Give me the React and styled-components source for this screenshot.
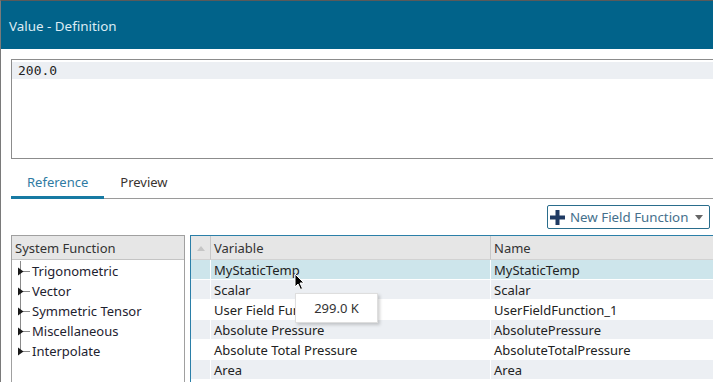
import React from 'react';
import styled, { createGlobalStyle } from 'styled-components';

const Global = createGlobalStyle`
  html, body { margin: 0; padding: 0; background: #fff; }
  body { width: 713px; height: 382px; overflow: hidden; font-family: "Noto Sans", "Open Sans", sans-serif; }
`;

const Window = styled.div`
  width: 713px;
  height: 382px;
  box-sizing: border-box;
  border-top: 1px solid #5a5a5a;
  border-left: 1px solid #7a7a7a;
  display: flex;
  flex-direction: column;
  overflow: hidden;
`;

const TitleBar = styled.div`
  height: 48px;
  flex: none;
  background: #01638a;
  color: #dcecf4;
  font-size: 13.4px;
  display: flex;
  align-items: center;
  padding-left: 8px;
  padding-top: 1px;
  box-sizing: border-box;
`;

const Body = styled.div`
  flex: 1;
  min-height: 0;
  padding: 10px 0 0 10px;
  display: flex;
  flex-direction: column;
`;

const Editor = styled.div`
  height: 100px;
  flex: none;
  border: 1px solid #8c8c8c;
  border-right: none;
  box-sizing: border-box;
  padding-top: 2px;
`;

const EditorLine = styled.div`
  background: ${p => (p.current ? '#eceff3' : 'transparent')};
  height: 17px;
  line-height: 17px;
  padding-left: 6px;
  font-family: "DejaVu Sans Mono", monospace;
  font-size: 13px;
  color: #222;
`;

const TabStrip = styled.div`
  display: flex;
  border-bottom: 1px solid #9a9a9a;
  flex: none;
`;

const Tab = styled.div`
  padding: 14px 16px 5px;
  line-height: 18px;
  font-size: 13px;
  color: ${p => (p.active ? '#2f7ba3' : '#3a3330')};
  border-bottom: 3px solid ${p => (p.active ? '#177aa3' : 'transparent')};
  margin-bottom: -1px;
`;

const Toolbar = styled.div`
  display: flex;
  justify-content: flex-end;
  padding: 6px 3px 6px 0;
  flex: none;
`;

const DropButton = styled.div`
  height: 24px;
  width: 163px;
  box-sizing: border-box;
  border: 1px solid #2a6d8c;
  border-radius: 2px;
  display: flex;
  align-items: center;
  gap: 5px;
  padding: 0 6px 0 2px;
  font-size: 13.3px;
  color: #45708c;
  background: #fff;
`;

const Caret = styled.span`
  width: 0;
  height: 0;
  border-left: 4px solid transparent;
  border-right: 4px solid transparent;
  border-top: 5px solid #666;
  margin-left: auto;
`;

const Panels = styled.div`
  flex: 1;
  min-height: 0;
  display: flex;
  gap: 5px;
`;

const FuncPanel = styled.div`
  width: 174px;
  flex: none;
  border: 1px solid #a0a0a0;
  border-bottom: none;
  box-sizing: border-box;
`;

const PanelHeader = styled.div`
  height: 24px;
  background: #e6e6e6;
  border-bottom: 1px solid #c4c4c4;
  box-sizing: border-box;
  font-size: 13px;
  color: #333;
  line-height: 24px;
  padding-left: 3px;
`;

const Tree = styled.div`
  padding-top: 1px;
`;

const TreeItem = styled.div`
  position: relative;
  height: 20px;
  line-height: 20px;
  font-size: 13px;
  color: #1e2230;
  padding-left: 20px;
`;

const Branch = styled.svg`
  position: absolute;
  left: 4px;
  top: 0;
`;

const Grid = styled.div`
  flex: 1;
  border: 1px solid #2b7fa8;
  border-right: none;
  border-bottom: none;
  display: grid;
  grid-template-columns: 19px 280px 1fr;
  grid-template-rows: 24px;
  grid-auto-rows: 20px;
  align-content: start;
  position: relative;
  font-size: 13px;
`;

const HeadCell = styled.div`
  background: #e6e6e6;
  border-left: ${p => (p.first ? 'none' : '1px solid #c8c8c8')};
  border-bottom: 1px solid #d2d2d2;
  box-sizing: border-box;
  color: #333;
  padding: 1px 0 0 3px;
  display: flex;
  align-items: center;
  justify-content: ${p => (p.first ? 'center' : 'flex-start')};
`;

const Cell = styled.div`
  background: ${p => (p.selected ? '#cde5eb' : p.odd ? '#eceff3' : '#fff')};
  border-left: ${p => (p.first ? 'none' : '1px solid #fff')};
  border-bottom: 1px solid #fff;
  box-sizing: border-box;
  line-height: 20px;
  padding-left: 3px;
  color: #222;
  white-space: nowrap;
  overflow: hidden;
`;

const SortUp = styled.span`
  width: 0;
  height: 0;
  border-left: 4px solid transparent;
  border-right: 4px solid transparent;
  border-bottom: 5px solid #c6c6c6;
  margin-left: -3px;
`;

const Tooltip = styled.div`
  position: absolute;
  left: 104px;
  top: 57px;
  width: 83px;
  height: 30px;
  box-sizing: border-box;
  background: #fff;
  border: 1px solid #dedede;
  box-shadow: 2px 2px 3px rgba(0, 0, 0, 0.18);
  font-size: 13px;
  color: #333;
  display: flex;
  align-items: center;
  justify-content: center;
`;

const Pointer = styled.svg`
  position: absolute;
  left: 103px;
  top: 37px;
`;

const functions = ['Trigonometric', 'Vector', 'Symmetric Tensor', 'Miscellaneous', 'Interpolate'];

const rows = [
  ['MyStaticTemp', 'MyStaticTemp'],
  ['Scalar', 'Scalar'],
  ['User Field Function 1', 'UserFieldFunction_1'],
  ['Absolute Pressure', 'AbsolutePressure'],
  ['Absolute Total Pressure', 'AbsoluteTotalPressure'],
  ['Area', 'Area'],
];

const BranchIcon = ({ last }) => (
  <Branch width="14" height="20" viewBox="0 0 14 20">
    <line x1="4.5" y1="0" x2="4.5" y2={last ? 10 : 20} stroke="#8a8a8a" />
    <line x1="4.5" y1="10.5" x2="14" y2="10.5" stroke="#8a8a8a" />
    <path d="M2 6.5 L7.5 10.5 L2 14.5 Z" fill="#1a1a1a" />
  </Branch>
);

const PlusIcon = () => (
  <svg width="15" height="15" viewBox="0 0 15 15">
    <path d="M5.5 0h4v5.5H15v4H9.5V15h-4V9.5H0v-4h5.5z" fill="#1f3a63" />
  </svg>
);

export default function App() {
  return (
    <>
      <Global />
      <Window>
        <TitleBar>Value - Definition</TitleBar>
        <Body>
          <Editor>
            <EditorLine current>200.0</EditorLine>
          </Editor>
          <TabStrip>
            <Tab active>Reference</Tab>
            <Tab>Preview</Tab>
          </TabStrip>
          <Toolbar>
            <DropButton>
              <PlusIcon />
              New Field Function
              <Caret />
            </DropButton>
          </Toolbar>
          <Panels>
            <FuncPanel>
              <PanelHeader>System Function</PanelHeader>
              <Tree>
                {functions.map((f, i) => (
                  <TreeItem key={f}>
                    <BranchIcon last={i === functions.length - 1} />
                    {f}
                  </TreeItem>
                ))}
              </Tree>
            </FuncPanel>
            <Grid>
              <HeadCell first><SortUp /></HeadCell>
              <HeadCell>Variable</HeadCell>
              <HeadCell>Name</HeadCell>
              {rows.map(([v, n], i) => (
                <React.Fragment key={n}>
                  <Cell first selected={i === 0} odd={i % 2 === 1} />
                  <Cell selected={i === 0} odd={i % 2 === 1}>{v}</Cell>
                  <Cell selected={i === 0} odd={i % 2 === 1}>{n}</Cell>
                </React.Fragment>
              ))}
              <Tooltip>299.0 K</Tooltip>
              <Pointer width="12" height="18" viewBox="0 0 12 18">
                <path d="M1 1 L1 14 L4 11 L6.5 16.5 L8.5 15.5 L6 10 L10 10 Z" fill="#000" stroke="#fff" strokeWidth="1" />
              </Pointer>
            </Grid>
          </Panels>
        </Body>
      </Window>
    </>
  );
}
